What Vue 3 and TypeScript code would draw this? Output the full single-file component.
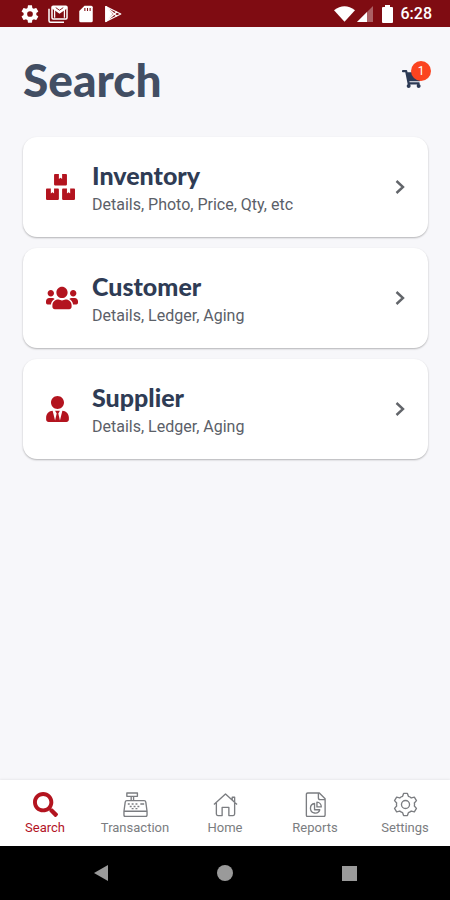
<script setup lang="ts">
import { ref } from 'vue'

interface SearchEntry {
  title: string
  detail: string
  viewBox: string
  width: number
  path: string
}

const entries: SearchEntry[] = [
  {
    title: 'Inventory',
    detail: 'Details, Photo, Price, Qty, etc',
    viewBox: '0 0 576 512',
    width: 29,
    path: 'M560 288h-80v96l-32-21.3-32 21.3v-96h-80c-8.8 0-16 7.2-16 16v192c0 8.8 7.2 16 16 16h224c8.8 0 16-7.2 16-16V304c0-8.8-7.2-16-16-16zm-384-64h224c8.8 0 16-7.2 16-16V16c0-8.8-7.2-16-16-16h-80v96l-32-21.3L256 96V0h-80c-8.8 0-16 7.2-16 16v192c0 8.8 7.2 16 16 16zm64 64h-80v96l-32-21.3L96 384v-96H16c-8.8 0-16 7.2-16 16v192c0 8.8 7.2 16 16 16h224c8.8 0 16-7.2 16-16V304c0-8.8-7.2-16-16-16z',
  },
  {
    title: 'Customer',
    detail: 'Details, Ledger, Aging',
    viewBox: '0 0 640 512',
    width: 32,
    path: 'M96 224c35.3 0 64-28.7 64-64s-28.7-64-64-64-64 28.7-64 64 28.7 64 64 64zm448 0c35.3 0 64-28.7 64-64s-28.7-64-64-64-64 28.7-64 64 28.7 64 64 64zm32 32h-64c-17.6 0-33.5 7.1-45.1 18.6 40.3 22.1 68.9 62 75.1 109.4h66c17.7 0 32-14.3 32-32v-32c0-35.3-28.7-64-64-64zm-256 0c61.9 0 112-50.1 112-112S381.9 32 320 32 208 82.1 208 144s50.1 112 112 112zm76.8 32h-8.3c-20.8 10-43.9 16-68.5 16s-47.6-6-68.5-16h-8.3C179.6 288 128 339.6 128 403.2V432c0 26.5 21.5 48 48 48h288c26.5 0 48-21.5 48-48v-28.8c0-63.6-51.6-115.2-115.2-115.2zm-223.7-13.4C161.5 263.1 145.6 256 128 256H64c-35.3 0-64 28.7-64 64v32c0 17.7 14.3 32 32 32h65.9c6.3-47.4 34.9-87.3 75.2-109.4z',
  },
  {
    title: 'Supplier',
    detail: 'Details, Ledger, Aging',
    viewBox: '0 0 448 512',
    width: 23,
    path: 'M224 256c70.7 0 128-57.3 128-128S294.7 0 224 0 96 57.3 96 128s57.3 128 128 128zm95.8 32.6L272 480l-32-136 32-56h-96l32 56-32 136-47.8-191.4C56.9 292 0 350.3 0 422.4V464c0 26.5 21.5 48 48 48h352c26.5 0 48-21.5 48-48v-41.6c0-72.1-56.9-130.4-128.2-133.8z',
  },
]

const tabs = ['Search', 'Transaction', 'Home', 'Reports', 'Settings']
const active = ref('Search')
const cartCount = ref(1)
</script>

<template>
  <div class="screen">
    <div class="status">
      <svg class="status-icon" viewBox="0 0 24 24" fill="currentColor"><path fill-rule="evenodd" d="M20.4 13.2a8.500 8.500 0 0 0 0-2.400l2.400-1.900c.2-.2.3-.5.1-.7l-2.300-4c-.2-.2-.4-.3-.7-.2l-2.800 1.100a8 8 0 0 0-2-1.200L14.700.9c0-.3-.3-.5-.5-.5H9.700c-.3 0-.5.2-.5.500l-.5 3a8 8 0 0 0-2 1.200L3.900 4c-.3-.1-.5 0-.7.200l-2.300 4c-.1.200-.1.500.1.700l2.500 1.900a8.500 8.500 0 0 0 0 2.400L1 15.100c-.2.200-.2.500-.1.700l2.300 4c.2.200.4.300.7.200l2.800-1.100a8 8 0 0 0 2 1.200l.5 3c0 .3.2.5.5.5h4.500c.2 0 .5-.2.5-.5l.4-3a8 8 0 0 0 2-1.200l2.800 1.100c.3.100.5 0 .7-.2l2.300-4c.2-.2.1-.5-.1-.7zM12 15.800a3.800 3.800 0 1 1 0-7.600 3.800 3.800 0 0 1 0 7.600z" /></svg>
      <svg class="status-icon" viewBox="0 0 26 24" fill="none" stroke="currentColor" stroke-width="2"><path d="M1 5v16q0 2 2 2H21" /><rect x="5" y="1.500" width="20" height="17" rx="1.500" /><path d="M5 1.500h20v3l-10 7-10-7z" fill="currentColor" stroke="none" /><path d="M10 3.500l5 3.500 5-3.500" stroke="#7f0c12" stroke-width="1.200" /><path d="M8.500 17V5M21.500 17V5" stroke-width="1.600" /></svg>
      <svg class="status-icon" viewBox="0 0 24 24"><path fill="currentColor" d="M10 1h9a2 2 0 0 1 2 2v18a2 2 0 0 1-2 2H5a2 2 0 0 1-2-2V8z" /><path d="M10.500 4v4M14 4v4M17.500 4v4" stroke="#7f0c12" stroke-width="1.400" /></svg>
      <svg class="status-icon" viewBox="0 0 24 24" fill="none" stroke="currentColor" stroke-linejoin="round"><path d="M1 2l20 10L1 22z" stroke-width="1.600" /><path d="M1 2v20l9-10z" fill="currentColor" /><path d="M1 2l15 13M1 22L16 9" stroke-width="2" /></svg>
      <span class="spacer"></span>
      <svg class="wifi" viewBox="0 0 22 16"><path fill="currentColor" d="M11 16L0 4Q11-4 22 4z" /></svg>
      <svg class="signal" viewBox="0 0 16 16" fill="currentColor"><path d="M16 0v16H0z" opacity=".35" /><path d="M10 6v10H0z" /></svg>
      <svg class="battery" viewBox="0 0 11 18"><path fill="currentColor" d="M3 0h5v2h2q1 0 1 1v14q0 1-1 1H1q-1 0-1-1V3q0-1 1-1h2z" /></svg>
      <time class="clock">6:28</time>
    </div>

    <header class="header">
      <h1>Search</h1>
      <button class="cart" type="button" aria-label="Cart">
        <svg viewBox="0 0 576 512" fill="currentColor"><path d="M528 301l47-208c4-15-8-29-23-29H159l-9-45C148 8 138 0 127 0H24C11 0 0 11 0 24v16c0 13 11 24 24 24h70l70 343c-17 10-28 28-28 49 0 31 25 56 56 56s56-25 56-56c0-16-6-30-17-40h210c-11 10-17 24-17 40 0 31 25 56 56 56s56-25 56-56c0-22-13-41-32-50l6-25c3-15-8-29-24-29H218l-6-32h293c11 0 21-8 23-19z" /></svg>
        <span class="badge">{{ cartCount }}</span>
      </button>
    </header>

    <main class="list">
      <button v-for="entry in entries" :key="entry.title" class="card" type="button">
        <span class="card-icon">
          <svg :viewBox="entry.viewBox" :width="entry.width" height="26" fill="currentColor"><path :d="entry.path" /></svg>
        </span>
        <span class="card-text">
          <span class="card-title">{{ entry.title }}</span>
          <span class="card-detail">{{ entry.detail }}</span>
        </span>
        <svg class="chevron" viewBox="0 0 10 16" fill="none" stroke="currentColor" stroke-width="2.400"><path d="M1.500 2L8 8l-6.500 6" /></svg>
      </button>
    </main>

    <nav class="tabs">
      <button v-for="tab in tabs" :key="tab" type="button" class="tab" :class="{ active: tab === active }" @click="active = tab">
        <svg v-if="tab === 'Search'" class="tab-icon" viewBox="0 0 512 512" fill="currentColor"><path d="M505 442.700L405.300 343c-4.500-4.500-10.600-7-17-7H372c27.600-35.300 44-79.700 44-128C416 93.100 322.900 0 208 0S0 93.100 0 208s93.100 208 208 208c48.300 0 92.700-16.400 128-44v16.300c0 6.400 2.500 12.500 7 17l99.700 99.700c9.400 9.400 24.600 9.400 33.900 0l28.300-28.300c9.400-9.400 9.400-24.600.1-34zM208 336c-70.700 0-128-57.200-128-128 0-70.700 57.200-128 128-128 70.700 0 128 57.200 128 128 0 70.700-57.200 128-128 128z" /></svg>
        <svg v-else-if="tab === 'Transaction'" class="tab-icon line" viewBox="0 0 26 26"><path d="M4 1h11v3.500H4zM8.500 4.500V9M11 4.500V9M4 9h18q1.500 0 1.700 1.500L25 20v4q0 1.500-1.500 1.500h-21Q1 25.500 1 24v-4l1.300-9.500Q2.500 9 4 9zM1 20h24" /><path d="M5 12.500h2M9 12.500h2M13 12.500h2M18 12.500h4M7 15h2M11 15h2M15 15h2M9 17.300h2M13 17.300h2" stroke-width="1.500" /></svg>
        <svg v-else-if="tab === 'Home'" class="tab-icon line" viewBox="0 0 26 26"><path d="M1 13L13 2l12 11M20 8V5.500h2.500V11M3.500 11.500V23q0 1.500 1.500 1.500h4.500V16h7v8.500H21q1.500 0 1.500-1.500V11.500" /></svg>
        <svg v-else-if="tab === 'Reports'" class="tab-icon line" viewBox="0 0 26 26"><path d="M5 1h12l6 6v17q0 1.500-1.500 1.500h-17Q3.500 25.500 3.500 24V2.500Q3.500 1 5 1zM16 1v5q0 2 2 2h5" /><path d="M12 12a5 5 0 1 0 5.500 6.500H12zM14.500 10.500v5H19a4.800 4.800 0 0 0-4.500-5z" /></svg>
        <svg v-else class="tab-icon line" viewBox="0 0 26 26"><circle cx="13" cy="13" r="4.200" /><path d="M11 1.500h4l1 3q2 .6 3 1.700l3.200-.8 2.200 3.600-2.200 2.400q.4 1.600 0 3.200l2.200 2.400-2.200 3.600-3.200-.8q-1 1.100-3 1.700l-1 3h-4l-1-3q-2-.6-3-1.700l-3.200.8-2.200-3.600 2.200-2.400q-.4-1.600 0-3.200L1.600 9l2.200-3.600 3.200.8q1-1.100 3-1.700z" /></svg>
        <span>{{ tab }}</span>
      </button>
    </nav>

    <div class="system-nav">
      <button type="button" aria-label="Back"><svg viewBox="0 0 16 16"><path d="M15 0v16L1 8z" /></svg></button>
      <button type="button" aria-label="Home screen"><svg viewBox="0 0 16 16"><circle cx="8" cy="8" r="8" /></svg></button>
      <button type="button" aria-label="Recent apps"><svg viewBox="0 0 16 16"><path d="M1 1h15v15H1z" /></svg></button>
    </div>
  </div>
</template>

<style>
body {
  margin: 0;
  background: #f7f7fa;
}
</style>

<style scoped>
.screen {
  display: flex;
  flex-direction: column;
  min-height: 100vh;
  background: #f7f7fa;
  font-family: Roboto, sans-serif;
}

button {
  margin: 0;
  padding: 0;
  border: 0;
  background: none;
  font-family: inherit;
  cursor: pointer;
}

svg {
  display: block;
  flex: none;
}

.status {
  display: flex;
  align-items: center;
  height: 27px;
  padding: 1px 18px 0 20px;
  background: #7f0c12;
  color: #fff;
  box-sizing: border-box;
}

.status-icon {
  width: 20px;
  height: 18px;
  margin-right: 8px;
}

.spacer {
  flex: 1;
}

.wifi {
  width: 21px;
  height: 16px;
}

.signal {
  width: 16px;
  height: 16px;
  margin-left: 2px;
}

.battery {
  width: 11px;
  height: 18px;
  margin-left: 9px;
}

.clock {
  margin-left: 8px;
  font-size: 16px;
  font-weight: 500;
  line-height: 24px;
}

.header {
  display: flex;
  align-items: flex-start;
  justify-content: space-between;
  padding: 24px 19px 28px 23px;
}

h1 {
  margin: 0;
  color: #424e63;
  font-family: Lato, sans-serif;
  font-size: 46px;
  font-weight: 900;
  line-height: 58px;
}

.cart {
  position: relative;
  width: 30px;
  height: 36px;
  margin-top: 10px;
  color: #2c3a55;
}

.cart svg {
  width: 20px;
  height: 18px;
  margin: 0 0 0 1px;
}

.badge {
  position: absolute;
  top: 0;
  right: 0;
  width: 20px;
  height: 20px;
  border-radius: 50%;
  background: #fb4420;
  color: #fff;
  font-size: 12px;
  line-height: 20px;
  text-align: center;
}

.list {
  display: flex;
  flex: 1;
  flex-direction: column;
  gap: 11px;
  padding: 0 22px 24px 23px;
}

.card {
  display: flex;
  align-items: center;
  min-height: 100px;
  padding: 0 23px;
  border-radius: 14px;
  background: #fff;
  box-shadow: 0 1px 2px rgba(0, 0, 0, 0.28);
  text-align: left;
}

.card-icon {
  width: 46px;
  color: #b3141f;
}

.card-text {
  display: flex;
  flex: 1;
  flex-direction: column;
  gap: 3px;
  padding-top: 3px;
}

.card-title {
  color: #2f3c55;
  font-family: Lato, sans-serif;
  font-size: 25px;
  font-weight: 900;
  line-height: 30px;
}

.card-detail {
  color: #5b6068;
  font-size: 16px;
  line-height: 24px;
}

.chevron {
  width: 10px;
  height: 16px;
  color: #62656a;
}

.tabs {
  display: grid;
  grid-template-columns: repeat(5, 1fr);
  height: 66px;
  background: #fff;
  box-shadow: 0 -1px 2px rgba(0, 0, 0, 0.06);
}

.tab {
  display: flex;
  flex-direction: column;
  align-items: center;
  gap: 3px;
  padding-top: 12px;
  color: #7b7d81;
  font-size: 13px;
  line-height: 16px;
}

.tab.active {
  color: #b3141f;
}

.tab-icon {
  width: 25px;
  height: 25px;
}

.line {
  fill: none;
  stroke: currentColor;
  stroke-width: 1.4;
  stroke-linejoin: round;
}

.system-nav {
  display: flex;
  align-items: center;
  justify-content: center;
  gap: 108px;
  height: 54px;
  background: #000;
}

.system-nav svg {
  width: 16px;
  height: 16px;
  fill: #9a9a9a;
}
</style>
